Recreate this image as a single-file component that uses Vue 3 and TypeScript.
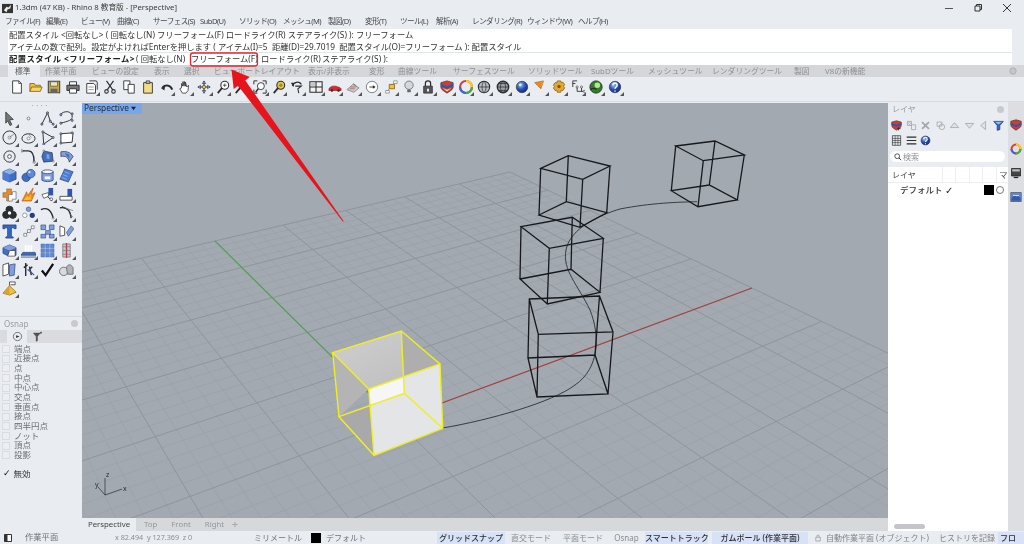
<script setup lang="ts">
type Layer = [string, string?, string?, number?]
type Icon = Layer[]
const circ = (x: number, y: number, r: number) => `M${x - r} ${y}a${r} ${r} 0 1 0 ${2 * r} 0a${r} ${r} 0 1 0 ${-2 * r} 0z`
const K = '#2b2d30', B = '#3f6fc4', L = '#7f9fe0', G = '#70757c', O = '#f08a1c', Y = '#f2c23c', W = '#fff', N = 'none'

const sphere = (f: string): Icon => [[circ(8, 8, 6.5), f, '#333', .8], [circ(6, 5.5, 1.6), '#dfe8f5', N]]

const topIcons: Icon[] = [
  [['M3 1h7l3 3v11H3z', W, K, 1], ['M10 1v3h3', N, K, .8]],
  [['M1 13V4h5l1 2h6v2', Y, '#8a6a10', 1], ['M1 13l2-5h12l-2 5z', '#f6d56a', '#8a6a10', 1]],
  [['M1.5 1.5h13v13h-13z', '#c5a84d', '#444', 1.2], ['M4 2h8v5H4z', '#f1e6b8', '#444', .7], ['M4 10h8v4.5H4z', '#666', N]],
  [['M4 2h8v4H4z', W, K, 1], ['M1 6h14v6H1z', '#777', K, 1], ['M4 10h8v5H4z', W, K, 1]],
  [['M2 4h8l2 2v9H2z', W, K, 1], ['M5 1h8l1 2v8', N, K, 1], ['M4 8h6M4 11h6', N, G, .8]],
  [['M4 1l7 10M12 1L5 11', N, K, 1.3], [circ(4, 13, 2), N, K, 1.2], [circ(12, 13, 2), N, K, 1.2]],
  [['M2 1h7v10H2z', W, K, 1], ['M7 5h7v10H7z', W, K, 1]],
  [['M3 3h10v12H3z', '#f4dc85', K, 1], ['M6 1h4v3H6z', '#bbb', K, .8]],
  [['M14 11C12 6 7 5 3 8', N, K, 2.2], ['M1 9l5-3-1 6z', K, N]],
  [['M4 9V4l1.5 3V2l1.5 5V1.5L8.500 7V2.500L10 8l2-2-.5 6L9 15H5L2 10z', W, K, .9]],
  [['M8 1v14M1 8h14', N, K, 1.2], ['M8 1l-2 3h4zM8 15l-2-3h4zM1 8l3-2v4zM15 8l-3-2v4z', L, K, .6], [circ(8, 8, 2), Y, K, .6]],
  [[circ(10, 6, 4.500), W, K, 1.2], ['M7 9l-5 6', N, K, 2], ['M10 4v4M8 6h4', N, K, .8]],
  [[circ(10, 6, 4.500), W, K, 1.2], ['M7 9l-5 6', N, K, 2], ['M7 3h6v6H7z', N, G, .7]],
  [['M1 5V1h4M11 1h4v4M15 11v4h-4M5 15H1v-4', N, K, 1.1], [circ(9, 7, 4), W, K, 1], ['M6 10l-3 4', N, K, 1.6]],
  [[circ(10, 6, 4.500), Y, K, 1.2], ['M7 9l-5 6', N, K, 2], [circ(10, 6, 2), '#7a9a40', N]],
  [['M13 5A5.500 5.500 0 0 0 3 7', N, K, 1.5], ['M1 3l4 0-1 5z', K, N], ['M6 7h7l-4 3 1 5', N, K, 1.2]],
  [['M1 2h14v12H1z', '#f2f2f2', K, 1.2], ['M8 2v12M1 8h14', N, K, 1.2], ['M2 3h5v4H2z', '#c8c8c8', N]],
  [['M1 11c0-3 3-3 4-4h4c2 1 5 1 6 3v2H1z', '#d9272a', '#7a1010', .6], [circ(4.500, 12, 1.500), K, N], [circ(12, 12, 1.500), K, N]],
  [['M1 11l7-6 7 4-6 5z', '#c8ccd2', G, .8], ['M5 8h6M4 10h6', N, '#cc4444', .8], ['M8 4l4 3', N, '#3a8a3a', 1]],
  [[circ(8, 8, 6.500), W, G, 1], ['M5 8h6', N, K, 1], ['M9 6l3 2-3 2z', K, N]],
  [['M2 12h4v3H2zM11 1h4v3h-4z', W, '#777', .8], ['M6 5h6v5H6z', Y, '#8a6a10', 1], ['M4 12l3-3M11 4L9 6', N, G, .7]],
  [[circ(8, 6, 4.800), '#d5d7d9', G, 1], ['M6 11h4v3H6z', '#666', N]],
  [['M3 7h10v8H3z', '#555', K, .8], ['M5 7V4a3 3 0 0 1 6 0v3', N, K, 1.4], ['M7 10h2v3H7z', W, N]],
  [['M1 3l7-2 7 2v5c0 3-4 5-7 7-3-2-7-4-7-7z', '#d43c2a', '#333', .8], ['M1 4l7 3 7-3v3L8 10 1 7z', '#2f55b5', N], ['M3 9l5 2 5-2-5 4z', '#eddf9e', N]],
  [[circ(8, 8, 6.800), N, '#e23a3a', 2.4], ['M8 1.200a6.800 6.800 0 0 1 6.800 6.800', N, '#f4d21f', 2.4], ['M14.800 8a6.800 6.800 0 0 1-6.800 6.800', N, '#34b44a', 2.4], ['M8 14.800A6.800 6.800 0 0 1 1.200 8', N, '#2e6be0', 2.4]],
  [[circ(8, 8, 6.500), '#b9bdc2', K, 1.2], ['M1.500 8h13M8 1.500c-3 3-3 10 0 13 3-3 3-10 0-13', N, K, .8]],
  [[circ(8, 8, 6.500), '#9aa0a8', K, 1.6], ['M1.500 8h13M8 1.500c-4 3-4 10 0 13 4-3 4-10 0-13M3 4h10M3 12h10', N, K, .8]],
  sphere('url(#bluesphere)'),
  [['M2 3l10-2-3 9z', O, '#8a4a10', .6], ['M9 2l3-1-3 9z', '#c9a32c', N]],
  [['M6 1h4l.500 2 2-.500 2 3-1.500 1.500L14.500 9l-2 3-2-.500L10 14H6l-.500-2.500-2 .500-2-3L3 7.500 1.500 6l2-3 2 .500z', '#e8a92a', '#7a5510', .8], [circ(8, 7.500, 2), '#7a5510', N]],
  [['M2 1h5M2 1v7M2 4h3M7 8v5h3M10 13h5M12 8v5', N, K, 1], [circ(7, 8, 1.200), W, K, .7], [circ(15, 13, 1.200), W, K, .7], [circ(12, 8, 1.200), W, K, .7]],
  [[circ(8, 8, 7), '#2f7f28', K, 1], [circ(9.500, 6, 3.200), '#b7e48c', N], ['M1.500 11c3-2 5-2 7 0', N, K, 1.6]],
  sphere('url(#bluesphere)').map((l, i) => (i === 1 ? (['M5.500 6c0-3.500 5-3.500 5 0 0 2-2.500 2-2.500 4M8 12v1.500', N, W, 1.6] as Layer) : l))
]

const leftIcons: Icon[] = [
  [['M4 1l8 8-4 .500 2.500 5-2 1-2.500-5L4 13z', '#777', K, .8]],
  [[circ(8, 8, 1.500), W, G, 1]],
  [['M2 14L8 2l3 9 3 3', N, K, 1], [circ(2, 14, 1.200), L, K, .6], [circ(8, 2, 1.200), L, K, .6], [circ(14, 14, 1.200), L, K, .6], [circ(11, 11, 1.200), L, K, .6]],
  [['M1 4c5-5 12-4 13 1 1 5-5 6-12 8', N, K, 1], [circ(2, 4, 1.200), L, K, .6], [circ(14, 3, 1.200), L, K, .6], [circ(14, 10, 1.200), L, K, .6], [circ(2, 13, 1.200), L, K, .6]],
  [[circ(8, 8, 7), N, K, 1], [circ(8, 8, 1.500), W, G, .8], ['M8 8l5-4', N, G, .8]],
  [['M1 9a7 5 0 1 0 14 0a7 5 0 1 0-14 0', N, K, 1], [circ(8, 9, 1.500), W, G, .8], ['M8 4l3 4', N, G, .7]],
  [['M3 2l11 6-10 7z', N, K, 1], [circ(3, 2, 1.200), L, K, .5], [circ(14, 8, 1.200), L, K, .5], [circ(4, 15, 1.200), L, K, .5]],
  [['M2 4l13-1-1 10-12 1z', W, K, 1], [circ(2, 4, 1.200), L, K, .5], [circ(14, 3, 1.200), L, K, .5], [circ(2, 14, 1.200), L, K, .5]],
  [[circ(8, 8, 6), N, K, 1], [circ(8, 8, 2), W, K, .8]],
  [['M1 2h7c5 0 6 5 6 12', N, K, 1.500], [circ(14, 14, 1.200), W, K, .6], [circ(1, 2, 1.200), W, K, .6]],
  [['M4 2l9 2 1 9-10 1-2-6z', B, K, .7], ['M7 5l3 1v5l-3-1z', L, N], [circ(4, 2, 1), W, K, .5], [circ(14, 13, 1), W, K, .5]],
  [['M2 3c5-1 10 0 13 5l-4 6c-1-5-4-7-9-6z', L, K, .7], ['M6 4l5 2 0 4-3-3z', '#3f6fc4', N]],
  [['M8 1l7 3v8l-7 3-7-3V4z', B, '#24407a', .7], ['M1 4l7 3 7-3-7-3z', '#8fb0ea', N], ['M8 7v8l-7-3V4z', '#4d7ed6', N]],
  [[circ(5.500, 10, 4.500), B, '#24407a', .7], [circ(10.500, 6, 4.500), '#5d8ade', '#24407a', .7], [circ(9, 4.500, 1.200), '#dfe8f5', N]],
  [['M2 4h12v9c-2 2-10 2-12 0z', L, '#24407a', .8], ['M2 4a6 2 0 1 1 12 0a6 2 0 1 1-12 0', '#f4f6fa', '#24407a', .8], ['M5 9h6v3H5z', W, N]],
  [['M6 1l9 3-5 11-9-3z', '#4d7ed6', '#24407a', .7], ['M6 4l5 2M4 7l5 2M3 10l5 2', N, '#a8c1ef', .7]],
  [['M1 6h4V2h5v4h1v5H9v4H5v-4H1z', O, '#7a4a10', .5], ['M7 8h4V5h4v8h-4v2H7z', W, G, .8]],
  [['M1 15L6 5l1 4 6-8-2 7 4-2-4 9z', O, '#a03b08', .5], ['M3 14l4-5 1 3 3-5-1 5 2 1z', '#ffc23c', N]],
  [['M9 1h5v8H9z', '#2f55b5', N], ['M2 8l7-2v4l-5 2z', W, K, .7], ['M8 10l5 5', N, K, 1], [circ(12, 13, 1.500), W, K, .7]],
  [['M9 2h5v8H9z', '#2f55b5', N], ['M1 10h13v4H1z', W, K, .8]],
  [[circ(8, 5, 3.800), K, K, 1], [circ(4.500, 10.500, 3.800), K, K, 1], [circ(11.500, 10.500, 3.800), K, K, 1], [circ(8, 8.500, 1.800), W, N]],
  [[circ(8, 4.500, 2.400), L, '#24407a', .6], [circ(4, 11, 2.400), W, G, .7], [circ(12, 11, 2.800), '#24407a', N]],
  [['M1 5c6-3 11 0 13 9', N, K, 1.500], [circ(14, 14, 1), W, K, .5]],
  [['M1 3c7-1 11 2 12 11', N, K, 1.500], ['M6 3l9 3M11 9l4 4', N, G, .8], ['M3 1l4 3', N, K, .8]],
  [['M1 1h14v4h-2l-1-1H10v9l2 1v1H4v-1l2-1V4H4L3 5H1z', '#3468c4', '#1e3f80', .8]],
  [['M3 13h3v-3H3zM7 9h3V6H7zM11 5h3V2h-3z', W, G, .8], ['M6 10l1-1M10 6l1-1', N, K, .8]],
  [['M1 1h5v5H1zM10 1h5v5h-5zM6 7h5v4H6zM1 11h5v4H1zM10 11h5v4h-5z', L, '#24407a', .6]],
  [['M1 2v11l5-1V4z', W, K, .8], ['M8 9l5-7 3 3-6 8z', L, '#24407a', .6]],
  [['M1 5l7-3 7 3v8H5l-4-2z', '#3f6fc4', '#24407a', .7], ['M8 8h6v6H6z', W, K, .7], ['M1 5l7 3 7-3-7-3z', '#7f9fe0', N]],
  [['M4 2h2v8H4zM7 2h2v8H7zM10 2h2v8h-2z', W, N], ['M0 13l2-3h13l1 3zM0 15h16', B, '#24407a', .8]],
  [['M1 1h4v4H1zM6 1h4v4H6zM11 1h4v4h-4zM1 6h4v4H1zM6 6h4v4H6zM11 6h4v4h-4zM1 11h4v4H1zM6 11h4v4H6zM11 11h4v4h-4z', '#5d8ade', '#3a5a9a', .4]],
  [['M4 1h8v14H4z', '#c5c8cc', G, .8], ['M8 0v16', N, '#d93030', 1.400], ['M4 4h8M4 8h8M4 12h8', N, G, .7]],
  [['M1 3l6-2v12l-6 2z', W, K, .8], ['M8 3l6-1-1 12-5 1z', L, '#24407a', .7]],
  [['M5 1v14M3 6l4-3M9 5l2 9M12 5l-3 3', N, K, 1.500], ['M7 8l3 2 4 4', N, '#2f55b5', 1.300]],
  [['M2 9l4 5L14 2', N, '#111', 2.400]],
  [[circ(5, 10, 4.500), '#d7d9dc', G, 1], ['M9 13l-1-7c1-4 5-4 7 0v7z', '#b0b3b8', G, 1]],
  [['M8 5L1 13l7 2 7-3z', Y, '#8a6a10', .8], ['M8 5L1 13l7 2z', '#d9a528', N], ['M8 5V1h6v3H9', W, K, .8]]
]

const menuItems = [['ファイル(F)', 5], ['編集(E)', 46], ['ビュー(V)', 81], ['曲線(C)', 117], ['サーフェス(S)', 153], ['SubD(U)', 200], ['ソリッド(O)', 239], ['メッシュ(M)', 283], ['製図(D)', 328], ['変形(T)', 365], ['ツール(L)', 400], ['解析(A)', 436], ['レンダリング(R)', 472], ['ウィンドウ(W)', 527], ['ヘルプ(H)', 578]] as [string, number][]
const tabItems = [['標準', 15], ['作業平面', 45], ['ビューの設定', 92], ['表示', 154], ['選択', 184], ['ビューポートレイアウト', 214], ['表示/非表示', 308], ['変形', 369], ['曲線ツール', 398], ['サーフェスツール', 453], ['ソリッドツール', 528], ['SubDツール', 591], ['メッシュツール', 648], ['レンダリングツール', 712], ['製図', 794], ['V8の新機能', 825]] as [string, number][]
const widths = (a: [string, number][], end: number) => a.map(([t, x], i) => ({ t, w: (i + 1 < a.length ? a[i + 1][1] : end) - x }))
const menu = widths(menuItems, 620)
const tabs = widths(tabItems, 880)

const osnaps = ['端点', '近接点', '点', '中点', '中心点', '交点', '垂直点', '接点', '四半円点', 'ノット', '頂点', '投影']

const cellSpec = [
  { t: 'グリッドスナップ', x: 437, w: 68, on: true },
  { t: '直交モード', x: 510, w: 42, on: false },
  { t: '平面モード', x: 562, w: 42, on: false },
  { t: 'Osnap', x: 613, w: 27, on: false },
  { t: 'スマートトラック', x: 645, w: 63, on: true },
  { t: 'ガムボール (作業平面)', x: 712, w: 96, on: true }
]
const statusCells = cellSpec.map((c, i) => ({
  ...c,
  gap: i === 0 ? 77 : c.x - (cellSpec[i - 1].x + cellSpec[i - 1].w)
}))

// grid plane: projective map of the unit square onto the screen
const [x0, y0, x1, y1, x2, y2, x3, y3] = [396, 420, 752, 288, 510, 172, 215, 241]
const dx1 = x1 - x2, dx2 = x3 - x2, sx = x0 - x1 + x2 - x3
const dy1 = y1 - y2, dy2 = y3 - y2, sy = y0 - y1 + y2 - y3
const det = dx1 * dy2 - dx2 * dy1
const g = (sx * dy2 - dx2 * sy) / det, h = (dx1 * sy - sx * dy1) / det
const a = x1 - x0 + g * x1, b = x3 - x0 + h * x3, d = y1 - y0 + g * y1, e = y3 - y0 + h * y3
const proj = (u: number, v: number) => {
  const w = g * u + h * v + 1
  return [(a * u + b * v + x0) / w, (d * u + e * v + y0) / w]
}
const N_CELLS = 25
const seg = (p: number[], q: number[]) => `M${p[0].toFixed(1)} ${p[1].toFixed(1)}L${q[0].toFixed(1)} ${q[1].toFixed(1)}`
let minor = '', major = ''
for (let i = -N_CELLS; i <= N_CELLS; i++) {
  const t = i / N_CELLS
  const s = seg(proj(t, -1), proj(t, 1)) + seg(proj(-1, t), proj(1, t))
  if (i % 5 === 0) major += s
  else minor += s
}

const wire = (c: number[][]) => {
  const [t0, t1, t2, t3, b0, b1, b2, b3] = c
  const m = (p: number[]) => `${p[0]} ${p[1]}`
  return `M${m(t0)}L${m(t1)}L${m(t2)}L${m(t3)}ZM${m(b0)}L${m(b1)}L${m(b2)}L${m(b3)}ZM${m(t0)}L${m(b0)}M${m(t1)}L${m(b1)}M${m(t2)}L${m(b2)}M${m(t3)}L${m(b3)}`
}
const cubes = [
  [[540.7, 168.3], [568.3, 155.7], [610, 166], [582.7, 179.3], [539, 215], [566.3, 201.7], [606.7, 212.7], [580, 227.3]],
  [[675.7, 146], [715, 141], [744.3, 155], [703.3, 160.7], [671.3, 190.7], [709.3, 185], [737.3, 200], [698, 206.7]],
  [[521, 226.7], [572.3, 217.3], [603.3, 238.3], [549.3, 248.3], [520, 279], [571, 269.3], [600, 292.3], [547.3, 304]],
  [[529.3, 299], [599.5, 296], [613, 332], [538.3, 334.3], [528, 358], [595, 355], [608, 394], [537, 397]]
].map(wire)
const yellow = wire([[332.7, 352.7], [401.3, 331], [440, 364], [368.7, 389], [339, 416.7], [404.3, 393.3], [442.7, 428.3], [374, 455.3]])

const panelIcons: Icon[] = [
  [['M1 3l7-2 7 2v5c0 3-4 5-7 7-3-2-7-4-7-7z', '#d43c2a', '#333', .8], ['M1 4l7 3 7-3v3L8 10 1 7z', '#2f55b5', N], ['M11 10v5M9 12.500h5', N, K, 1.200]],
  [['M2 2h6v6H2z', N, '#a4a7ab', 1.200], ['M8 7h6v7H8z', N, '#a4a7ab', 1.200], [circ(5, 5, 1.500), N, '#a4a7ab', 1]],
  [['M3 3l10 10M13 3L3 13', N, '#a4a7ab', 2.600]],
  [['M3 3h7v6H3z', N, '#a4a7ab', 1.200], [circ(10, 10, 4), N, '#a4a7ab', 1.200]],
  [['M8 4l6 7H2z', '#e0e2e5', '#a4a7ab', 1.200]],
  [['M8 12L2 5h12z', '#e0e2e5', '#a4a7ab', 1.200]],
  [['M4 8l7-6v12z', '#e0e2e5', '#a4a7ab', 1.200]],
  [['M1 2h14L10 8v6l-4 1V8z', '#3468c4', '#1e3f80', 1], ['M3 3h10L8 6z', '#9cc0f0', N]]
]
const panelIcons2: Icon[] = [
  [['M2 1h12v14H2z', '#e6e6e6', K, 1], ['M2 5h12M2 8h12M2 11h12M6 1v14M10 1v14', N, K, .8]],
  [['M1 3h14M1 8h14M1 13h14', N, K, 1.800]],
  sphere('url(#bluesphere)').map((l, i) => (i === 1 ? (['M5.500 6c0-3.500 5-3.500 5 0 0 2-2.500 2-2.500 4M8 12v1.500', N, W, 1.600] as Layer) : l))
]
const hasMenu = (i: number) => ![0, 1, 2, 3, 5, 6, 7].includes(i)
</script>

<template>
  <div class="app">
    <svg class="defs" width="0" height="0">
      <defs>
        <radialGradient id="bluesphere" cx=".38" cy=".32" r=".8">
          <stop offset="0" stop-color="#9dc0f5" />
          <stop offset=".5" stop-color="#2450b8" />
          <stop offset="1" stop-color="#0c2060" />
        </radialGradient>
        <linearGradient id="ytop" x1="0" y1="0" x2="1" y2="1">
          <stop offset="0" stop-color="#cfcfcf" />
          <stop offset="1" stop-color="#bcbcbc" />
        </linearGradient>
      </defs>
    </svg>

    <header class="title">
      <svg class="logo" viewBox="0 0 12 12"><path d="M0 1h12v10H0z" fill="#333" /><path d="M2 8l3-4 2 1 3-3-1 4-3 1-1 3z" fill="#eee" /></svg>
      <span>1.3dm (47 KB) - Rhino 8 教育版 - [Perspective]</span>
      <div class="win">
        <svg viewBox="0 0 10 10"><path d="M1 5.500h8" stroke="#555" stroke-width="1" /></svg>
        <svg viewBox="0 0 10 10"><path d="M2 3h5v5H2zM3.500 3V1.500H8.500V6.500H7" fill="none" stroke="#333" stroke-width="1" /></svg>
        <svg viewBox="0 0 10 10"><path d="M1 1l8 8M9 1l-8 8" stroke="#333" stroke-width="1" /></svg>
      </div>
    </header>

    <nav class="menu">
      <span v-for="m in menu" :key="m.t" :style="{ width: m.w + 'px' }">{{ m.t }}</span>
    </nav>

    <section class="cmd">
      <div class="cmd-line">配置スタイル &lt;回転なし&gt; ( 回転なし(N) フリーフォーム(F) ロードライク(R) ステアライク(S) ): フリーフォーム</div>
      <div class="cmd-line second">アイテムの数で配列。設定がよければEnterを押します ( アイテム(I)=5 &nbsp;距離(D)=29.7019 &nbsp;配置スタイル(O)=フリーフォーム ): 配置スタイル</div>
      <div class="cmd-line third">
        <b>配置スタイル &lt;フリーフォーム&gt;</b>
        <span class="o-a">( 回転なし(N)</span>
        <span class="o-b">フリーフォーム(F)</span>
        <span class="o-c">ロードライク(R)</span>
        <span>ステアライク(S) ):</span>
      </div>
    </section>

    <div class="tabs">
      <span v-for="(t, i) in tabs" :key="t.t" :class="{ active: i === 0 }" :style="{ width: t.w + 'px' }">{{ t.t }}</span>
      <svg class="tabgear" viewBox="0 0 10 10"><circle cx="5" cy="5" r="4" fill="#c4c6c9" stroke="#aaa" /></svg>
    </div>

    <div class="toolbar">
      <span v-for="(ic, i) in topIcons" :key="i" class="tool" :class="{ more: hasMenu(i) }">
        <svg viewBox="0 0 16 16"><path v-for="(l, j) in ic" :key="j" :d="l[0]" :fill="l[1] ?? 'none'" :stroke="l[2] ?? 'none'" :stroke-width="l[3] ?? 0" /></svg>
      </span>
    </div>

    <main class="main">
      <aside class="left">
        <div class="dots">• • • •</div>
        <div class="lefttools">
          <span v-for="(ic, i) in leftIcons" :key="i" class="ltool" :class="{ more: i !== 1 && i !== 34 }">
            <svg viewBox="0 0 16 16"><path v-for="(l, j) in ic" :key="j" :d="l[0]" :fill="l[1] ?? 'none'" :stroke="l[2] ?? 'none'" :stroke-width="l[3] ?? 0" /></svg>
          </span>
        </div>
        <div class="osnap">
          <div class="ptitle"><span>Osnap</span><i class="pclose" /></div>
          <div class="ptabs">
            <span class="ptab on"><svg viewBox="0 0 16 16"><circle cx="8" cy="8" r="6" fill="none" stroke="#444" /><path d="M6 6l5 2-5 2z" fill="#333" /></svg></span>
            <span class="ptab"><svg viewBox="0 0 16 16"><path d="M2 3h10L8 8v6l-2 1V8z" fill="#555" stroke="#333" stroke-width=".5" /><path d="M13 1v3M11.500 2.500h3" stroke="#333" /></svg></span>
          </div>
          <label v-for="o in osnaps" :key="o" class="snap"><i class="box" />{{ o }}</label>
          <div class="disable"><span class="tick">✓</span>無効</div>
        </div>
      </aside>

      <section class="center">
        <div class="viewport">
          <svg class="scene" viewBox="82 103 806 415" preserveAspectRatio="none">
            <path :d="minor" stroke="#9aa0a8" stroke-width=".7" fill="none" />
            <path :d="major" stroke="#8c929a" stroke-width=".9" fill="none" />
            <path d="M396 420L752 288" stroke="#a8403c" stroke-width="1.100" />
            <path d="M396 420L215 241" stroke="#55a058" stroke-width="1.200" />
            <path d="M442.700 428C490 420 553 402 575 385C600 368 600 335 590 310C578 285 562 270 566 250C570 228 600 215 620 209C650 203 680 202 697 201.700" fill="none" stroke="#2d3034" stroke-width=".9" />
            <path v-for="(c, i) in cubes" :key="i" :d="c" fill="none" stroke="#16181b" stroke-width="1.300" />
            <path d="M332.700 352.700L401.300 331L440 364L368.700 389Z" fill="url(#ytop)" />
            <path d="M401.300 331L440 364L404.300 393.300Z" fill="#aeaeae" />
            <path d="M332.700 352.700L368.700 389L339 416.700Z" fill="#b4b4b4" />
            <path d="M368.700 389L440 364L442.700 428.300L374 455.300Z" fill="#e4e5e6" />
            <path d="M368.700 389L404 377L404.300 393.300L370 405Z" fill="#f6f6f7" />
            <path d="M339 416.700L370 405L374 455.300Z" fill="#a9a9a9" />
            <path :d="yellow" fill="none" stroke="#f2ee1e" stroke-width="1.400" />
            <path d="M105 495L122 489M105 495V478M105 495L98 487" stroke="#2b2f34" stroke-width=".7" fill="none" />
            <text x="123" y="491" class="axis">x</text>
            <text x="106" y="477" class="axis">z</text>
            <text x="95" y="487" class="axis">y</text>
          </svg>
          <div class="vp-tab">Perspective<svg viewBox="0 0 6 6"><path d="M0 1h6L3 5z" fill="#223" /></svg></div>
        </div>
        <div class="vtabs">
          <span class="vt on">Perspective</span><span class="vt">Top</span><span class="vt">Front</span><span class="vt">Right</span><span class="vt plus">✛</span>
        </div>
      </section>

      <aside class="right">
        <div class="rmain">
          <div class="ptitle"><span>レイヤ</span><i class="pclose" /></div>
          <div class="ricons">
            <svg v-for="(ic, i) in panelIcons" :key="i" viewBox="0 0 16 16"><path v-for="(l, j) in ic" :key="j" :d="l[0]" :fill="l[1] ?? 'none'" :stroke="l[2] ?? 'none'" :stroke-width="l[3] ?? 0" /></svg>
          </div>
          <div class="ricons">
            <svg v-for="(ic, i) in panelIcons2" :key="i" viewBox="0 0 16 16"><path v-for="(l, j) in ic" :key="j" :d="l[0]" :fill="l[1] ?? 'none'" :stroke="l[2] ?? 'none'" :stroke-width="l[3] ?? 0" /></svg>
          </div>
          <div class="search">
            <svg viewBox="0 0 10 10"><circle cx="4" cy="4" r="3" fill="none" stroke="#333" /><path d="M6 6l3 3" stroke="#333" stroke-width="1.200" /></svg>
            <span>検索</span>
          </div>
          <div class="table">
            <div class="thead"><span class="c-name">レイヤ</span><span class="c" /><span class="c" /><span class="c" /><span class="c" /><span class="c last">マ</span></div>
            <div class="trow">
              <span class="lname">デフォルト</span><span class="chk">✓</span><i class="sw" /><i class="radio" />
            </div>
            <div class="scroll" />
          </div>
        </div>
        <div class="rtabs">
          <svg viewBox="0 0 16 16"><path d="M1 3l7-2 7 2v5c0 3-4 5-7 7-3-2-7-4-7-7z" fill="#d43c2a" stroke="#333" stroke-width=".8" /><path d="M1 5l7 3 7-3v3L8 11 1 8z" fill="#2f55b5" /></svg>
          <svg viewBox="0 0 16 16"><circle cx="8" cy="8" r="6" fill="none" stroke="#e23a3a" stroke-width="2.600" /><path d="M8 2a6 6 0 0 1 6 6" fill="none" stroke="#f4d21f" stroke-width="2.600" /><path d="M14 8a6 6 0 0 1-6 6" fill="none" stroke="#34b44a" stroke-width="2.600" /><path d="M8 14a6 6 0 0 1-6-6" fill="none" stroke="#2e6be0" stroke-width="2.600" /></svg>
          <svg viewBox="0 0 16 16"><path d="M2 2h12v10H2z" fill="#444" stroke="#222" /><path d="M3 3h10v3H3z" fill="#bbb" /><path d="M5 14h6" stroke="#222" stroke-width="1.600" /></svg>
          <svg viewBox="0 0 16 16"><path d="M1 2h14v12H1z" fill="#5d8ade" stroke="#556" /><path d="M2 10l4-5 3 3 2-2 3 4v3H2z" fill="#3a5a9a" /><path d="M4 6h8" stroke="#fff" /></svg>
        </div>
      </aside>
    </main>

    <footer class="status">
      <svg class="st-ico" viewBox="0 0 8 8"><path d="M.500.500h7v7h-7z" fill="#fff" stroke="#333" /><path d="M.500.500h3v7h-3z" fill="#333" /></svg>
      <span class="st-plane">作業平面</span>
      <span class="st-coord">x 82.494 &nbsp;y 127.369 &nbsp;z 0</span>
      <span class="st-unit">ミリメートル</span>
      <i class="st-swatch" />
      <span class="st-layer">デフォルト</span>
      <span v-for="c in statusCells" :key="c.t" class="cell" :class="{ on: c.on }" :style="{ width: c.w + 'px', marginLeft: c.gap + 'px' }">{{ c.t }}</span>
      <svg class="st-lock" viewBox="0 0 8 10"><path d="M1 4h6v5H1zM2.500 4V2.500a1.500 1.500 0 0 1 3 0V4" fill="none" stroke="#999" /></svg>
      <span class="st-auto">自動作業平面 (オブジェクト)</span>
      <span class="st-hist">ヒストリを記録</span>
      <span class="cell on st-flow">フロ</span>
    </footer>

    <svg class="annot" viewBox="0 0 1024 544">
      <rect x="190.500" y="53" width="67" height="13" rx="2.500" fill="none" stroke="#e4262c" stroke-width="1.300" />
      <path d="M231.500 69.500L249.700 77.100L245.300 80.400L343.700 221.300L343 221.800L238.100 85.800L233.700 89.100Z" fill="#e8141c" />
    </svg>
  </div>
</template>

<style>
html, body { margin: 0; background: #e9ecf0; overflow: hidden; }
</style>

<style scoped>
.app {
  position: relative;
  width: 1024px;
  height: 544px;
  overflow: hidden;
  display: flex;
  flex-direction: column;
  background: #e9ecf0;
  color: #3a3c40;
  font: 8px/1 "Noto Sans", "Noto Sans CJK JP", sans-serif;
  filter: blur(.3px);
}
.defs { display: block; height: 0; }
.title { height: 16px; display: flex; align-items: center; padding-left: 2px; font-size: 7.700px; color: #3a3a3a; flex: none; }
.logo { width: 11px; height: 11px; margin-right: 2px; }
.win { margin-left: auto; display: flex; gap: 19px; padding-right: 12px; }
.win svg { width: 10px; height: 10px; }
.menu { height: 12px; display: flex; align-items: center; padding-left: 5px; flex: none; font-size: 7.600px; letter-spacing: -.55px; color: #45474b; white-space: nowrap; }
.menu span { flex: none; }
.cmd { height: 36px; margin: 1px 12px 0 8px; background: #fff; flex: none; display: flex; flex-direction: column; color: #333; font-size: 8.300px; }
.cmd-line { height: 12px; line-height: 12px; white-space: nowrap; padding-left: 1px; }
.cmd-line.second { border-bottom: 1px solid #e2e5ea; height: 12px; box-sizing: border-box; }
.cmd-line.third { display: flex; }
.cmd-line.third span { flex: none; }
.cmd-line b { font-weight: 700; color: #222; width: 127px; flex: none; letter-spacing: .45px; }
.o-a { width: 55px; }
.o-b { width: 70px; }
.o-c { width: 61px; }
.tabs { height: 12px; display: flex; align-items: center; background: #d4d6d9; flex: none; padding-left: 15px; font-size: 7.800px; color: #8d9094; white-space: nowrap; position: relative; z-index: 0; }
.tabs span { flex: none; line-height: 12px; }
.tabs .active { color: #555; }
.tabs .active::before { content: ""; position: absolute; left: 8px; width: 32px; top: 0; height: 12px; background: #e9ecf0; z-index: -1; }
.tabgear { width: 8px; height: 8px; margin-left: auto; margin-right: 7px; }
.toolbar { height: 24px; display: flex; align-items: flex-start; padding: 1px 0 0 8px; box-sizing: border-box; flex: none; }
.tool { width: 18.690px; height: 18px; flex: none; position: relative; display: block; }
.tool svg { width: 14px; height: 14px; display: block; margin: 2px; }
.more::after { content: ""; position: absolute; right: 1px; bottom: 0; border: 2px solid transparent; border-right-color: #555; border-bottom-color: #555; }
.main { flex: 1; min-height: 0; display: flex; border-top: 1px solid #d9dbde; }
.left { width: 82px; flex: none; display: flex; flex-direction: column; }
.dots { height: 6px; padding-right: 2px; text-align: center; font-size: 4px; line-height: 7px; color: #999; letter-spacing: 1px; }
.lefttools { display: grid; grid-template-columns: repeat(4, 19px); grid-auto-rows: 18.900px; height: 206px; padding: 1px 0 0 1px; box-sizing: border-box; }
.ltool { position: relative; display: block; }
.ltool svg { width: 15px; height: 15px; display: block; margin: 2px 0 0 1px; }
.osnap { margin-top: 2px; flex: 1; border-top: 1px solid #d9dbde; }
.ptitle { height: 13px; display: flex; align-items: center; justify-content: space-between; padding: 0 4px; font-size: 8px; color: #9a9da1; }
.pclose { width: 7px; height: 7px; border-radius: 50%; background: #c8cacd; display: block; }
.ptabs { height: 13px; display: flex; background: #d9dbde; margin-bottom: 1px; }
.ptab { width: 20px; height: 13px; display: flex; align-items: center; justify-content: center; }
.ptab.on { background: #e9ecf0; margin-left: 7px; }
.ptab svg { width: 11px; height: 11px; }
.snap { height: 9.700px; display: flex; align-items: center; font-size: 8.500px; color: #6b6e72; white-space: nowrap; }
.box { width: 8px; height: 8px; border: 1px solid #dadce0; box-sizing: border-box; margin: 0 4px 0 2px; background: #eceef2; display: block; }
.disable { margin-top: 9px; display: flex; align-items: center; gap: 3px; font-size: 8.500px; color: #333; padding-left: 3px; }
.tick { font-size: 9px; color: #111; font-family: "DejaVu Sans", sans-serif; }
.center { flex: 1; min-width: 0; display: flex; flex-direction: column; }
.viewport { flex: 1; min-height: 0; margin-top: 1px; position: relative; background: #a3a9b1; overflow: hidden; }
.scene { display: block; width: 100%; height: 100%; }
.axis { font: 7px "Noto Sans", sans-serif; fill: #2b2f34; }
.vp-tab { position: absolute; left: 0; top: 0; width: 60px; height: 11px; background: #78a6ea; display: flex; align-items: center; gap: 2px; font-size: 8.300px; color: #1f2a3c; padding-left: 2px; box-sizing: border-box; }
.vp-tab svg { width: 5px; height: 5px; }
.vtabs { height: 13px; flex: none; display: flex; background: #d6d8db; font-size: 7.800px; color: #94979b; align-items: stretch; }
.vt { padding: 0 6px 0 8px; display: flex; align-items: center; }
.vt.on { background: #e9ecf0; color: #444; width: 54px; box-sizing: border-box; padding: 0 0 0 6px; }
.vt.plus { padding-left: 2px; font-size: 7px; }
.right { width: 136px; flex: none; display: flex; }
.rmain { width: 120px; flex: none; display: flex; flex-direction: column; }
.rmain .ptitle { height: 14px; margin: 0 0 2px; }
.ricons { height: 15px; display: flex; align-items: center; gap: 3.500px; padding-left: 3px; }
.ricons svg { width: 11px; height: 11px; flex: none; }
.search { height: 11px; margin: 3px 3px 5px 2px; border-radius: 6px; background: #fff; display: flex; align-items: center; padding-left: 4px; gap: 1px; color: #8f9296; font-size: 8px; }
.search svg { width: 8px; height: 8px; }
.table { flex: 1; background: #fff; position: relative; font-size: 8px; color: #444; }
.thead { height: 15px; display: flex; align-items: center; border-bottom: 1px solid #eceef0; }
.c-name { width: 54px; padding-left: 4px; box-sizing: border-box; height: 100%; display: flex; align-items: center; }
.c { width: 13.400px; height: 100%; border-left: 1px solid #eceef0; box-sizing: border-box; display: flex; align-items: center; padding-left: 3px; }
.c.last { width: 12px; }
.trow { height: 14px; display: flex; align-items: center; position: relative; font-size: 8.500px; color: #333; }
.lname { margin-left: 12px; width: 45px; font-weight: 500; }
.chk { font: 10px "DejaVu Sans", sans-serif; color: #222; }
.sw { width: 10px; height: 10px; background: #000; margin-left: 31px; display: block; }
.radio { width: 8px; height: 8px; border: 1px solid #777; border-radius: 50%; box-sizing: border-box; margin-left: 2px; display: block; }
.scroll { position: absolute; left: 6px; bottom: 2px; width: 31px; height: 5px; border-radius: 3px; background: #c3c5c8; }
.rtabs { flex: 1; display: flex; flex-direction: column; align-items: center; padding-top: 17px; gap: 12px; background: #dcdee1; }
.rtabs svg { width: 12px; height: 12px; flex: none; }
.status { height: 13px; flex: none; display: flex; align-items: center; font-size: 8px; color: #70737a; white-space: nowrap; }
.st-ico { width: 8px; height: 8px; margin-left: 4px; }
.st-plane { margin-left: 13px; width: 90px; font-size: 8.300px; }
.st-coord { width: 139px; font-size: 7.200px; color: #8b8e92; }
.st-unit { width: 57px; }
.st-swatch { width: 10px; height: 10px; background: #000; display: block; margin-right: 5px; }
.st-layer { width: 34px; }
.cell { height: 12px; line-height: 12px; flex: none; text-align: center; color: #8b8e92; box-sizing: border-box; }
.cell.on { background: #d7e2f6; color: #2c2e33; font-weight: 500; }
.st-lock { width: 6px; height: 8px; margin-left: 7px; }
.st-auto { margin-left: 5px; width: 113px; color: #808387; }
.st-hist { width: 59px; color: #808387; }
.st-flow { width: 26px; text-align: left; padding-left: 2px; }
.annot { position: absolute; inset: 0; width: 1024px; height: 544px; pointer-events: none; }
</style>
